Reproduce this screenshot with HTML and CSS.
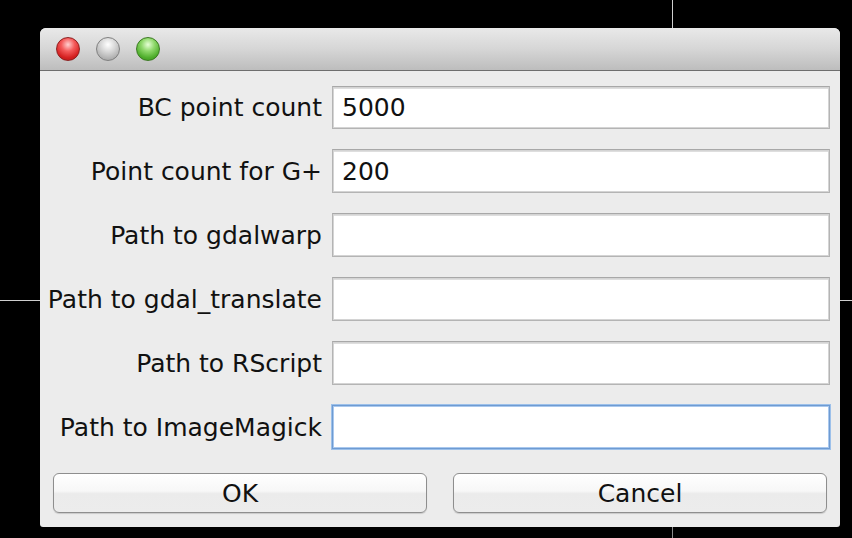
FILE: index.html
```html
<!DOCTYPE html>
<html>
<head>
<meta charset="utf-8">
<link rel="stylesheet" href="styles.css">
</head>
<body>
<div class="desktop">
  <div class="vline vline-top"></div>
  <div class="vline vline-bottom"></div>
  <div class="hline hline-left"></div>
  <div class="hline hline-right"></div>
  <div class="window">
    <div class="titlebar">
      <span class="light red"></span>
      <span class="light gray"></span>
      <span class="light green"></span>
    </div>
    <div class="content">
      <div class="form">
        <label class="lbl">BC point count</label><div class="field">5000</div>
        <label class="lbl">Point count for G+</label><div class="field">200</div>
        <label class="lbl">Path to gdalwarp</label><div class="field"></div>
        <label class="lbl">Path to gdal_translate</label><div class="field"></div>
        <label class="lbl">Path to RScript</label><div class="field"></div>
        <label class="lbl">Path to ImageMagick</label><div class="field focused"></div>
      </div>
      <div class="buttons">
        <button class="btn">OK</button>
        <button class="btn">Cancel</button>
      </div>
    </div>
  </div>
</div>
</body>
</html>
```

FILE: styles.css
```css
html, body {
  margin: 0;
  padding: 0;
  background: #000;
}
.desktop {
  position: relative;
  width: 852px;
  height: 538px;
  overflow: hidden;
  background: #000;
  font-family: "DejaVu Sans", "Liberation Sans", sans-serif;
}
.vline {
  position: absolute;
  left: 672px;
  width: 1px;
  background: #cfcfcf;
}
.vline-top { top: 0; height: 28px; }
.vline-bottom { top: 527px; height: 11px; background: #8a8a8a; }
.hline {
  position: absolute;
  top: 300px;
  height: 1px;
  background: #cfcfcf;
}
.hline-left { left: 0; width: 40px; }
.hline-right { left: 840px; width: 12px; }

.window {
  position: absolute;
  left: 40px;
  top: 28px;
  width: 800px;
  height: 499px;
  background: #ececec;
  border-radius: 6px 6px 3px 3px;
  overflow: hidden;
  display: flex;
  flex-direction: column;
}
.titlebar {
  height: 42px;
  border-bottom: 1px solid #6e6e6e;
  background: linear-gradient(#e9e9e9, #d6d6d6 50%, #bdbdbd);
  display: flex;
  align-items: center;
  padding-left: 16px;
  gap: 16px;
  box-sizing: content-box;
}
.light {
  width: 24px;
  height: 24px;
  border-radius: 50%;
  box-sizing: border-box;
  border: 1px solid rgba(0,0,0,0.35);
}
.red {
  background: radial-gradient(circle at 50% 30%, #ffd0d0 0%, #f45b5b 35%, #d42020 70%, #b01515 100%);
  border-color: #8e2020;
}
.gray {
  background: radial-gradient(circle at 50% 30%, #ffffff 0%, #d6d6d6 40%, #b0b0b0 75%, #9c9c9c 100%);
  border-color: #808080;
}
.green {
  background: radial-gradient(circle at 50% 30%, #e6ffd6 0%, #8fd86b 35%, #4fae2c 70%, #3a8c1e 100%);
  border-color: #3b7a22;
}
.content {
  flex: 1;
  display: flex;
  flex-direction: column;
  padding: 15px 10px 14px 13px;
}
.form {
  display: grid;
  grid-template-columns: 269px 498px;
  grid-template-rows: 43px repeat(5, 44px);
  row-gap: 20px;
  column-gap: 10px;
}
.lbl {
  display: flex;
  align-items: center;
  justify-content: flex-end;
  font-size: 25px;
  color: #111;
  white-space: nowrap;
}
.field {
  box-sizing: border-box;
  background: #fff;
  border: 1px solid #b4b4b4;
  border-top-color: #a8a8a8;
  box-shadow: inset 0 0 0 1px #d4d4d4, inset 0 2px 0 #dedede;
  font-size: 25px;
  color: #111;
  padding-left: 9px;
  display: flex;
  align-items: center;
}
.field.focused {
  border: 1px solid #6e9bd2;
  box-shadow: 0 0 0 1px #9cc0ea, inset 0 0 0 1px #a9c8ee;
}
.buttons {
  margin-top: auto;
  display: flex;
  gap: 26px;
  padding-right: 3px;
}
.btn {
  width: 374px;
  height: 40px;
  box-sizing: border-box;
  border: 1px solid #8e8e8e;
  border-radius: 6px;
  background: linear-gradient(#ffffff, #f7f7f7 45%, #ebebeb 52%, #ececec 100%);
  box-shadow: 0 1px 1px rgba(0,0,0,0.15);
  font-family: "DejaVu Sans", "Liberation Sans", sans-serif;
  font-size: 25px;
  color: #111;
  padding: 0;
}
```
